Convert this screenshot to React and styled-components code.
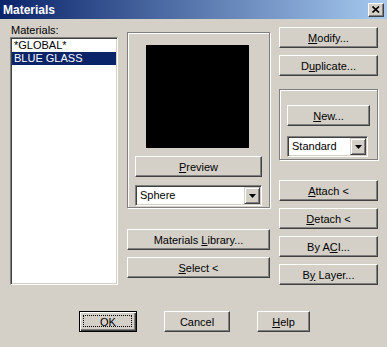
import React from 'react'
import styled, { createGlobalStyle } from 'styled-components'

const GlobalStyle = createGlobalStyle`
  body {
    margin: 0;
    background: #d4d0c8;
    font-family: "Liberation Sans", Arial, sans-serif;
    font-size: 11px;
  }
`

const Window = styled.div`
  width: 387px;
  height: 347px;
  background: #d4d0c8;
  display: flex;
  flex-direction: column;
  overflow: hidden;
`

const TitleBar = styled.div`
  height: 19px;
  box-sizing: border-box;
  padding: 0 3px;
  display: flex;
  align-items: center;
  justify-content: space-between;
  background: linear-gradient(to right, #0a246a, #a6caf0);
`

const Title = styled.span`
  color: #fff;
  font-weight: bold;
  font-size: 12px;
`

const CloseBox = styled.div`
  width: 16px;
  height: 14px;
  box-sizing: border-box;
  background: #d4d0c8;
  border: 1px solid;
  border-color: #fff #404040 #404040 #fff;
  box-shadow: inset -1px -1px #808080;
  display: flex;
  align-items: center;
  justify-content: center;
`

const Main = styled.div`
  display: flex;
  gap: 9px;
  padding: 0 9px 0 10px;
  height: 266px;
`

const Column = styled.div`
  width: ${p => p.$w}px;
  padding-top: ${p => p.$top}px;
  display: flex;
  flex-direction: column;
  box-sizing: border-box;
`

const Label = styled.div`
  height: 14px;
  line-height: 14px;
  padding-left: 1px;
`

const ListBox = styled.div`
  height: 248px;
  box-sizing: border-box;
  background: #fff;
  border: 1px solid;
  border-color: #808080 #fff #fff #808080;
  box-shadow: inset 1px 1px #404040, inset -1px -1px #d4d0c8;
  padding: 1px 1px 0 1px;
`

const ListItem = styled.div`
  height: 13px;
  line-height: 13px;
  padding-left: 2px;
  font-size: 11px;
  color: ${p => (p.$selected ? '#fff' : '#000')};
  background: ${p => (p.$selected ? '#0a246a' : 'transparent')};
`

const Group = styled.div`
  height: ${p => p.$h}px;
  margin-top: ${p => p.$mt || 0}px;
  box-sizing: border-box;
  border: 1px solid #808080;
  box-shadow: inset 1px 1px #fff, 1px 1px #fff;
  display: flex;
  flex-direction: column;
  align-items: ${p => p.$align || 'center'};
  padding: ${p => p.$pad};
`

const PreviewSwatch = styled.div`
  width: 103px;
  height: 103px;
  background: #000;
  margin-left: -2px;
`

const Button = styled.button`
  width: ${p => p.$w}px;
  height: 21px;
  margin-top: ${p => p.$mt || 0}px;
  flex-shrink: 0;
  box-sizing: border-box;
  padding: 0;
  background: #d4d0c8;
  font-family: "Liberation Sans", Arial, sans-serif;
  font-size: 11px;
  color: #000;
  border: 1px solid;
  border-color: #fff #404040 #404040 #fff;
  box-shadow: inset -1px -1px #808080;
  text-align: center;
`

const DefaultButton = styled(Button)`
  position: relative;
  border: 1px solid #000;
  box-shadow: inset 1px 1px #fff, inset -1px -1px #404040, inset -2px -2px #808080;

  &::after {
    content: '';
    position: absolute;
    left: 3px;
    top: 3px;
    right: 4px;
    bottom: 4px;
    border: 1px dotted #000;
  }
`

const Combo = styled.div`
  width: ${p => p.$w}px;
  height: 21px;
  margin-top: ${p => p.$mt || 0}px;
  box-sizing: border-box;
  background: #fff;
  border: 1px solid;
  border-color: #808080 #fff #fff #808080;
  box-shadow: inset 1px 1px #404040, inset -1px -1px #d4d0c8;
  display: flex;
  align-items: stretch;
  padding: 1px;
`

const ComboText = styled.span`
  flex: 1;
  padding-left: 3px;
  line-height: 17px;
`

const DropButton = styled.div`
  width: 16px;
  box-sizing: border-box;
  background: #d4d0c8;
  border: 1px solid;
  border-color: #d4d0c8 #404040 #404040 #d4d0c8;
  box-shadow: inset 1px 1px #fff, inset -1px -1px #808080;
  display: flex;
  align-items: center;
  justify-content: center;
`

const Footer = styled.div`
  display: flex;
  gap: 27px;
  padding-left: 79px;
  margin-top: 26px;
`

function ComboBox({ value, width, mt }) {
  return (
    <Combo $w={width} $mt={mt}>
      <ComboText>{value}</ComboText>
      <DropButton>
        <svg width="7" height="4" viewBox="0 0 7 4">
          <path d="M0 0h7L3.5 4z" fill="#000" />
        </svg>
      </DropButton>
    </Combo>
  )
}

export default function App() {
  return (
    <>
      <GlobalStyle />
      <Window>
        <TitleBar>
          <Title>Materials</Title>
          <CloseBox>
            <svg width="8" height="7" viewBox="0 0 8 7">
              <path d="M0.5 0.5L7 6.5M7 0.5L0.5 6.5" stroke="#000" strokeWidth="1.6" />
            </svg>
          </CloseBox>
        </TitleBar>

        <Main>
          <Column $w={108} $top={4}>
            <Label>Materials:</Label>
            <ListBox>
              <ListItem>*GLOBAL*</ListItem>
              <ListItem $selected>BLUE GLASS</ListItem>
            </ListBox>
          </Column>

          <Column $w={143} $top={13}>
            <Group $h={176} $pad="12px 0 0 0">
              <PreviewSwatch />
              <Button $w={127} $mt={8}><u>P</u>review</Button>
              <ComboBox value="Sphere" width={127} mt={8} />
            </Group>
            <Button $w={143} $mt={21}>Materials <u>L</u>ibrary...</Button>
            <Button $w={143} $mt={7}><u>S</u>elect &lt;</Button>
          </Column>

          <Column $w={99} $top={8}>
            <Button $w={99}><u>M</u>odify...</Button>
            <Button $w={99} $mt={7}>D<u>u</u>plicate...</Button>
            <Group $h={71} $mt={13} $align="flex-start" $pad="15px 0 0 7px">
              <Button $w={83}><u>N</u>ew...</Button>
              <ComboBox value="Standard" width={81} mt={10} />
            </Group>
            <Button $w={99} $mt={20}><u>A</u>ttach &lt;</Button>
            <Button $w={99} $mt={7}><u>D</u>etach &lt;</Button>
            <Button $w={99} $mt={7}>By A<u>C</u>I...</Button>
            <Button $w={99} $mt={7}>B<u>y</u> Layer...</Button>
          </Column>
        </Main>

        <Footer>
          <DefaultButton $w={58}>OK</DefaultButton>
          <Button $w={66}>Cancel</Button>
          <Button $w={53}><u>H</u>elp</Button>
        </Footer>
      </Window>
    </>
  )
}
